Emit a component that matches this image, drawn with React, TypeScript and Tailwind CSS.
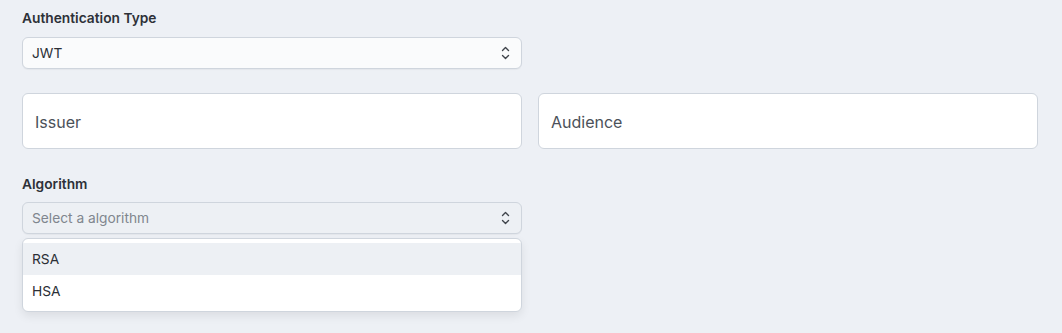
const font = { fontFamily: 'Inter, "Noto Sans", sans-serif' };

function UpDown() {
  return (
    <svg width="9" height="14" viewBox="0 0 9 14" fill="none" className="text-[#3f444b]">
      <path d="M1.5 4.5L4.5 1.5L7.5 4.5" stroke="currentColor" strokeWidth="1.4" strokeLinecap="round" strokeLinejoin="round" />
      <path d="M1.5 9.5L4.5 12.5L7.5 9.5" stroke="currentColor" strokeWidth="1.4" strokeLinecap="round" strokeLinejoin="round" />
    </svg>
  );
}

function SelectBox({ value, placeholder, muted }: { value?: string; placeholder?: string; muted?: boolean }) {
  return (
    <div
      className={`flex h-[32px] items-center justify-between rounded-[6px] border border-[#cfd5dd] pl-[9px] pr-[11px] text-[13.75px] shadow-[0_1px_1px_rgba(0,0,0,0.04)] ${
        muted ? 'bg-[#edf0f4]' : 'bg-[#fafbfc]'
      }`}
    >
      {value ? (
        <span className="text-[#2b2f36]">{value}</span>
      ) : (
        <span className="text-[#80868e]">{placeholder}</span>
      )}
      <UpDown />
    </div>
  );
}

function TextField({ placeholder }: { placeholder: string }) {
  return (
    <div className="flex h-[56px] items-center rounded-[6px] border border-[#cfd5dd] bg-white pl-[12px] pt-[2px] text-[16px] text-[#4b5159]">
      {placeholder}
    </div>
  );
}

const options = ['RSA', 'HSA'];

export default function App() {
  return (
    <div className="min-h-[333px] w-full bg-[#edf0f5] pl-[22px] pr-[24px] pt-[9px]" style={font}>
      <div className="grid grid-cols-2 gap-x-[16px]">
        <div>
          <div className="mb-[10px] h-[18px] text-[13.75px] font-semibold leading-[18px] text-[#2d3138]">
            Authentication Type
          </div>
          <SelectBox value="JWT" />
        </div>
        <div />
      </div>

      <div className="mt-[24px] grid grid-cols-2 gap-x-[16px]">
        <TextField placeholder="Issuer" />
        <TextField placeholder="Audience" />
      </div>

      <div className="mt-[26px] grid grid-cols-2 gap-x-[16px]">
        <div>
          <div className="mb-[9px] h-[18px] text-[13.75px] font-semibold leading-[18px] text-[#2d3138]">
            Algorithm
          </div>
          <SelectBox placeholder="Select a algorithm" muted />
          <div className="mt-[4px] rounded-[6px] border border-[#cfd5dd] bg-white py-[4px] shadow-[0_4px_10px_rgba(0,0,0,0.08)]">
            {options.map((o, i) => (
              <div
                key={o}
                className={`flex h-[32px] items-center pl-[9px] pt-[1px] text-[13.75px] text-[#2b2f36] ${
                  i === 0 ? 'bg-[#edf0f4]' : ''
                }`}
              >
                {o}
              </div>
            ))}
          </div>
        </div>
        <div />
      </div>
    </div>
  );
}
